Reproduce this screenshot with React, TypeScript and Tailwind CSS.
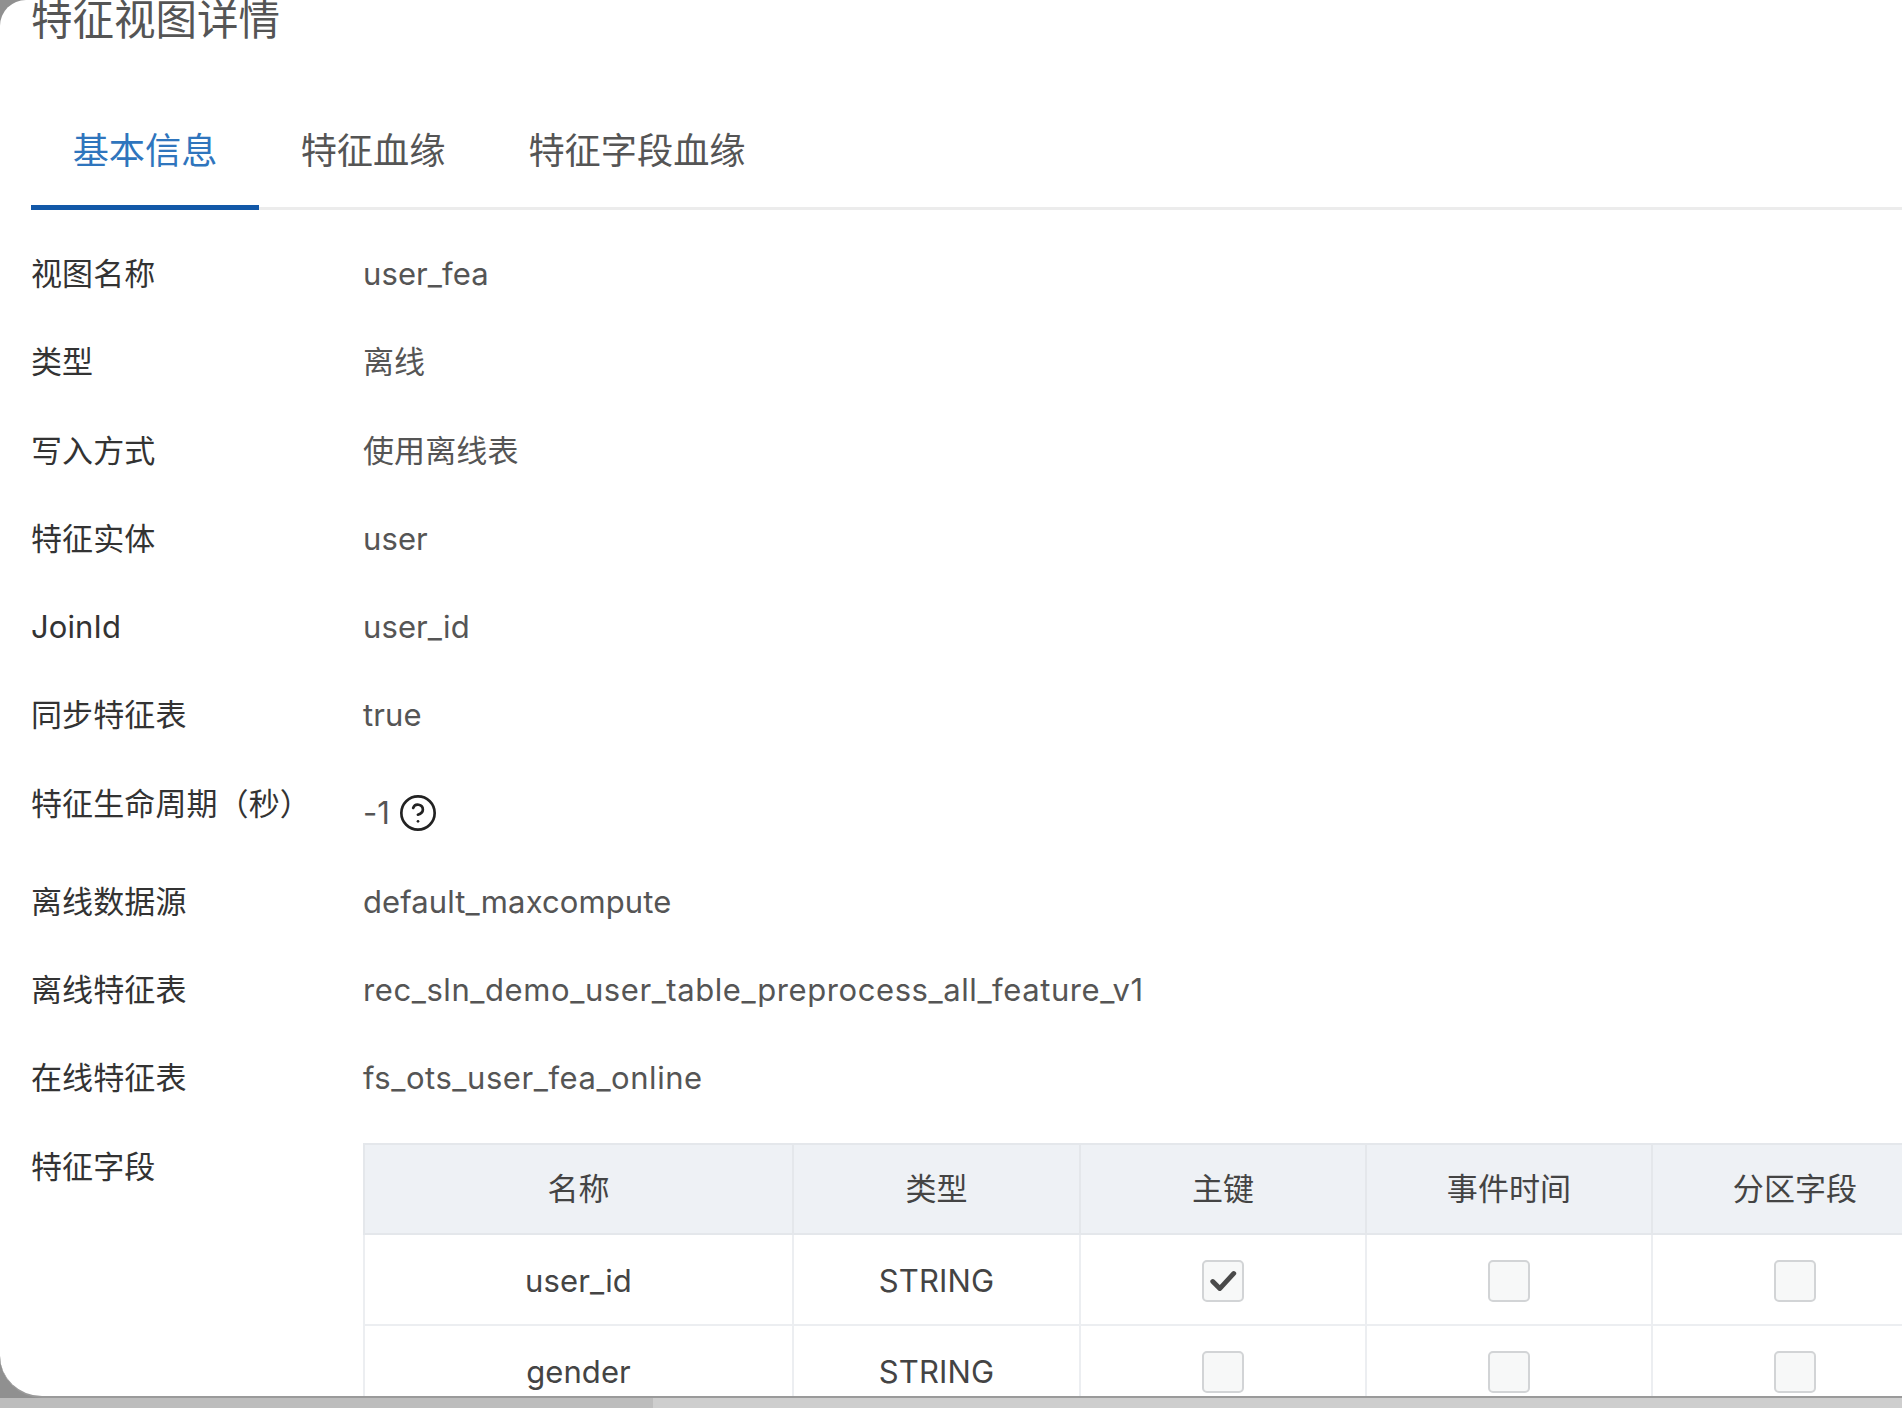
import { CircleHelp } from "lucide-react";

const rows: [string, string, string?][] = [
  ["视图名称", "user_fea"],
  ["类型", "离线"],
  ["写入方式", "使用离线表"],
  ["特征实体", "user"],
  ["JoinId", "user_id"],
  ["同步特征表", "true"],
];
const rows2: [string, string, string?][] = [
  ["离线数据源", "default_maxcompute"],
  ["离线特征表", "rec_sln_demo_user_table_preprocess_all_feature_v1", "tracking-[0.58px]"],
  ["在线特征表", "fs_ots_user_fea_online", "tracking-[0.55px]"],
];

function Box({ checked }: { checked?: boolean }) {
  return (
    <span className="mx-auto flex h-[42px] w-[42px] items-center justify-center rounded-[5px] border-2 border-[#d2d4d6] bg-[#f7f8f8]">
      {checked && (
        <svg width="28" height="24" viewBox="0 0 26 22" fill="none">
          <path d="M3.5 11.5 L10 18 L23 4" stroke="#4a4a4a" strokeWidth="4.5" strokeLinecap="round" strokeLinejoin="round" />
        </svg>
      )}
    </span>
  );
}

function Row({ label, value, cls }: { label: string; value: string; cls?: string }) {
  return (
    <div className="flex h-[88.3px] items-start">
      <div className="w-[332px] text-[#333333]">{label}</div>
      <div className={`text-[#555555] ${cls ?? ""}`}>{value}</div>
    </div>
  );
}

const th = "border-2 border-[#e4e7eb] bg-[#eef1f5] text-center font-normal text-[#444444]";
const td = "border-2 border-[#eceef1] pt-[4px] text-center font-normal text-[#444444]";

export default function App() {
  return (
    <div
      className="flex h-[1408px] w-[1902px] flex-col overflow-hidden bg-[#909090] text-[31px] leading-[44px] font-normal tracking-[0.1px]"
      style={{ fontFamily: '"Inter", "Noto Sans CJK SC", sans-serif' }}
    >
      <div className="flex h-[1398px] flex-col overflow-hidden rounded-tl-[26px] rounded-bl-[42px] border-b-2 border-[#9a9a9a] bg-white pl-[31px]">
        <div className="h-[36px] text-[41.5px] leading-[40px] tracking-normal text-[#555555]">特征视图详情</div>
        <div className="mt-[84px] flex h-[90px] border-b-[3px] border-[#ececec] text-[36.2px] leading-[62px] tracking-normal">
          <div className="-mb-[3px] h-[90px] w-[228px] border-b-[5px] border-[#1258a8] text-center text-[#2f75bd]">基本信息</div>
          <div className="w-[228px] text-center text-[#555555]">特征血缘</div>
          <div className="w-[300px] text-center text-[#555555]">特征字段血缘</div>
        </div>
        <div className="mt-[42px] flex flex-col">
          {rows.map(([l, v, c]) => <Row key={l} label={l} value={v} cls={c} />)}
          <div className="flex h-[98px] items-start">
            <div className="w-[332px] text-[#333333]">特征生命周期（秒）</div>
            <div className="mt-[9px] flex items-center text-[#555555]">
              -1
              <CircleHelp size={40} strokeWidth={1.6} color="#222222" className="ml-[8px]" />
            </div>
          </div>
          {rows2.map(([l, v, c]) => <Row key={l} label={l} value={v} cls={c} />)}
          <div className="flex items-start">
            <div className="w-[332px] shrink-0 text-[#333333]">特征字段</div>
            <table className="-mt-[2px] w-[1574px] shrink-0 table-fixed border-collapse">
              <colgroup>
                <col className="w-[429px]" />
                <col className="w-[287px]" />
                <col className="w-[286px]" />
                <col className="w-[286px]" />
                <col className="w-[286px]" />
              </colgroup>
              <thead>
                <tr className="h-[90px]">
                  <th className={th}>名称</th>
                  <th className={th}>类型</th>
                  <th className={th}>主键</th>
                  <th className={th}>事件时间</th>
                  <th className={th}>分区字段</th>
                </tr>
              </thead>
              <tbody>
                <tr className="h-[91px]">
                  <td className={td}>user_id</td>
                  <td className={td}>STRING</td>
                  <td className={td}><Box checked /></td>
                  <td className={td}><Box /></td>
                  <td className={td}><Box /></td>
                </tr>
                <tr className="h-[91px]">
                  <td className={td}>gender</td>
                  <td className={td}>STRING</td>
                  <td className={td}><Box /></td>
                  <td className={td}><Box /></td>
                  <td className={td}><Box /></td>
                </tr>
              </tbody>
            </table>
          </div>
        </div>
      </div>
      <div className="flex h-[10px]">
        <div className="w-[653px] bg-[#bdbdbd]" />
        <div className="flex-1 bg-[#cecece]" />
      </div>
    </div>
  );
}
